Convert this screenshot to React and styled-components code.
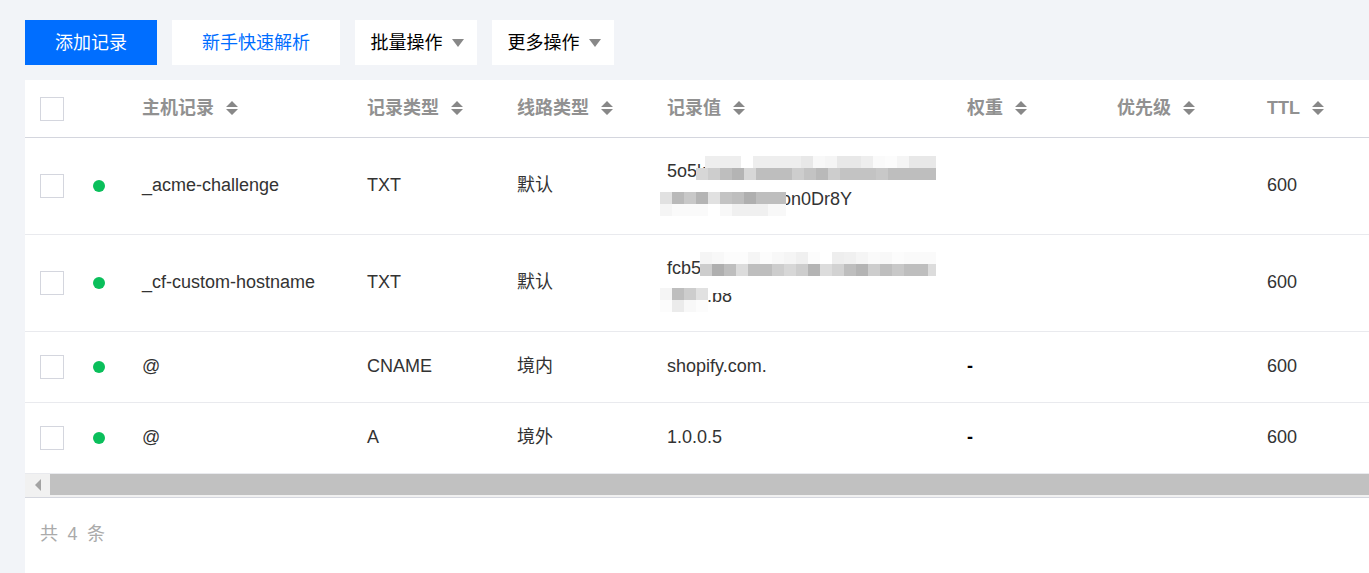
import React from 'react';
import styled, { createGlobalStyle } from 'styled-components';

const Global = createGlobalStyle`
  html, body {
    margin: 0;
    height: 573px;
    overflow: hidden;
    background: #f2f4f8;
    font-family: "Liberation Sans", "Noto Sans CJK SC", sans-serif;
    font-size: 18px;
  }
`;

const Page = styled.div`
  display: flex;
  flex-direction: column;
  height: 573px;
  padding-left: 25px;
  box-sizing: border-box;
`;

const Toolbar = styled.div`
  display: flex;
  gap: 15px;
  height: 80px;
  padding-top: 20px;
  box-sizing: border-box;
`;

const Button = styled.div`
  display: flex;
  align-items: center;
  justify-content: center;
  gap: 9px;
  height: 45px;
  padding: 0 0 3px ${p => (p.$menu ? 2 : 0)}px;
  box-sizing: border-box;
  width: ${p => p.$width}px;
  background: ${p => (p.$primary ? '#006eff' : '#fff')};
  color: ${p => (p.$primary ? '#fff' : p.$link ? '#006eff' : '#000')};
`;

const Caret = styled.span`
  width: 0;
  height: 0;
  border-left: 6px solid transparent;
  border-right: 6px solid transparent;
  border-top: 8px solid #888;
  margin-top: 3px;
`;

const Panel = styled.div`
  flex: 1;
  background: #fff;
  overflow: hidden;
`;

const Row = styled.div`
  display: grid;
  grid-template-columns: 53px 49px 225px 150px 150px 300px 150px 150px 90px;
  align-items: center;
  height: ${p => p.$height}px;
  padding-left: 15px;
  width: 1344px;
  border-bottom: 1px solid ${p => (p.$head ? '#d4d6de' : '#e9eaee')};
  color: #333;
`;

const HeadCell = styled.div`
  display: flex;
  align-items: center;
  gap: 12px;
  font-weight: 700;
  line-height: 24px;
  color: #919191;
  padding-bottom: 2px;
`;

const Cell = styled.div`
  position: relative;
  padding-bottom: 2px;
  line-height: 28px;
  color: ${p => (p.$strong ? '#000' : '#333')};
  font-weight: ${p => (p.$strong ? 700 : 400)};
`;

const Check = styled.span`
  display: block;
  width: 22px;
  height: 22px;
  border: 1px solid #d4d6de;
  background: #fff;
`;

const Dot = styled.span`
  display: block;
  width: 12px;
  height: 12px;
  border-radius: 50%;
  background: #0abf5b;
`;

const Spacer = styled.span`
  display: inline-block;
  width: ${p => p.$width}px;
`;

// the pixelated blur that hides part of a record value
const Mosaic = styled.div`
  position: absolute;
  left: -7px;
  top: ${p => p.$top}px;
  display: flex;
  flex-direction: column;
`;

const MosaicRow = styled.div`
  display: flex;
  align-items: flex-start;
  overflow: hidden;
  height: 12px;
  width: ${p => p.$width}px;
  margin-left: ${p => p.$indent || 0}px;
  margin-bottom: ${p => p.$after || 0}px;
`;

const Tile = styled.span`
  display: block;
  flex: none;
  width: 12px;
  height: 12px;
  background: rgb(${p => p.$shade}, ${p => p.$shade}, ${p => p.$shade});
`;

const TextMask = styled.span`
  display: block;
  flex: none;
  width: 25px;
  height: 5px;
  background: #fff;
`;

const Scrollbar = styled.div`
  display: flex;
  height: 24px;
  padding-bottom: 2px;
  border-bottom: 1px solid #d4d6de;
  box-sizing: border-box;
  background: #f1f1f1;
`;

const ScrollLeft = styled.div`
  display: flex;
  align-items: center;
  justify-content: center;
  width: 25px;
`;

const ScrollArrow = styled.span`
  width: 0;
  height: 0;
  border-top: 6px solid transparent;
  border-bottom: 6px solid transparent;
  border-right: 6px solid #a3a3a3;
`;

const ScrollThumb = styled.div`
  flex: 1;
  background: #c1c1c1;
`;

const Footer = styled.div`
  padding: 24px 15px 0;
  color: #aaa;
  line-height: 24px;
  word-spacing: 4.5px;
`;

function SortIcon() {
  return (
    <svg width="12" height="14" viewBox="0 0 12 14">
      <path d="M6 0 L12 6 H0 Z M6 14 L0 8 H12 Z" fill="#888" />
    </svg>
  );
}

function Tiles({ shades, children, ...rest }) {
  return (
    <MosaicRow {...rest}>
      {shades.map((s, i) => <Tile key={i} $shade={s} />)}
      {children}
    </MosaicRow>
  );
}

const columns = ['主机记录', '记录类型', '线路类型', '记录值', '权重', '优先级', 'TTL'];

function App() {
  return (
    <Page>
      <Global />
      <Toolbar>
        <Button $primary $width={132}>添加记录</Button>
        <Button $link $width={168}>新手快速解析</Button>
        <Button $menu $width={122}>批量操作<Caret /></Button>
        <Button $menu $width={122}>更多操作<Caret /></Button>
      </Toolbar>
      <Panel>
        <Row $head $height={57}>
          <Check />
          <span />
          {columns.map(c => <HeadCell key={c}>{c}<SortIcon /></HeadCell>)}
        </Row>
        <Row $height={96}>
          <Check />
          <Dot />
          <Cell>_acme-challenge</Cell>
          <Cell>TXT</Cell>
          <Cell>默认</Cell>
          <Cell>
            5o5k<br />
            <Spacer $width={114} />on0Dr8Y
            <Mosaic $top={-1}>
              <Tiles $indent={45} $width={231} shades={[238, 238, 238, 255, 238, 238, 238, 238, 232, 248, 245, 232, 232, 238, 250, 252, 245, 232, 232, 232]} />
              <Tiles $indent={36} $width={240} $after={12} shades={[215, 205, 190, 180, 215, 190, 190, 190, 205, 195, 185, 205, 195, 195, 195, 200, 190, 190, 190, 190]} />
              <Tiles $width={126} shades={[225, 185, 200, 180, 225, 195, 190, 175, 190, 190, 190]} />
              <Tiles $width={126} shades={[245, 250, 250, 250, 255, 248, 240, 240, 240, 248, 248]} />
            </Mosaic>
          </Cell>
          <span />
          <span />
          <Cell>600</Cell>
        </Row>
        <Row $height={96}>
          <Check />
          <Dot />
          <Cell>_cf-custom-hostname</Cell>
          <Cell>TXT</Cell>
          <Cell>默认</Cell>
          <Cell>
            fcb5<br />
            <Spacer $width={40} />.b8
            <Mosaic $top={-2}>
              <Tiles $indent={40} $width={236} shades={[245, 248, 252, 252, 245, 252, 248, 245, 240, 252, 255, 238, 240, 245, 250, 248, 252, 250, 250, 250]} />
              <Tiles $indent={40} $width={236} $after={12} shades={[205, 175, 190, 220, 190, 190, 205, 215, 205, 180, 220, 210, 190, 180, 205, 190, 200, 190, 190, 220]} />
              <Tiles $width={73} shades={[245, 190, 205, 225]}><TextMask /></Tiles>
              <Tiles $width={48} shades={[252, 235, 248, 252]} />
            </Mosaic>
          </Cell>
          <span />
          <span />
          <Cell>600</Cell>
        </Row>
        <Row $height={70}>
          <Check />
          <Dot />
          <Cell>@</Cell>
          <Cell>CNAME</Cell>
          <Cell>境内</Cell>
          <Cell>shopify.com.</Cell>
          <Cell $strong>-</Cell>
          <span />
          <Cell>600</Cell>
        </Row>
        <Row $height={70}>
          <Check />
          <Dot />
          <Cell>@</Cell>
          <Cell>A</Cell>
          <Cell>境外</Cell>
          <Cell>1.0.0.5</Cell>
          <Cell $strong>-</Cell>
          <span />
          <Cell>600</Cell>
        </Row>
        <Scrollbar>
          <ScrollLeft><ScrollArrow /></ScrollLeft>
          <ScrollThumb />
        </Scrollbar>
        <Footer>共 4 条</Footer>
      </Panel>
    </Page>
  );
}

export default App;
